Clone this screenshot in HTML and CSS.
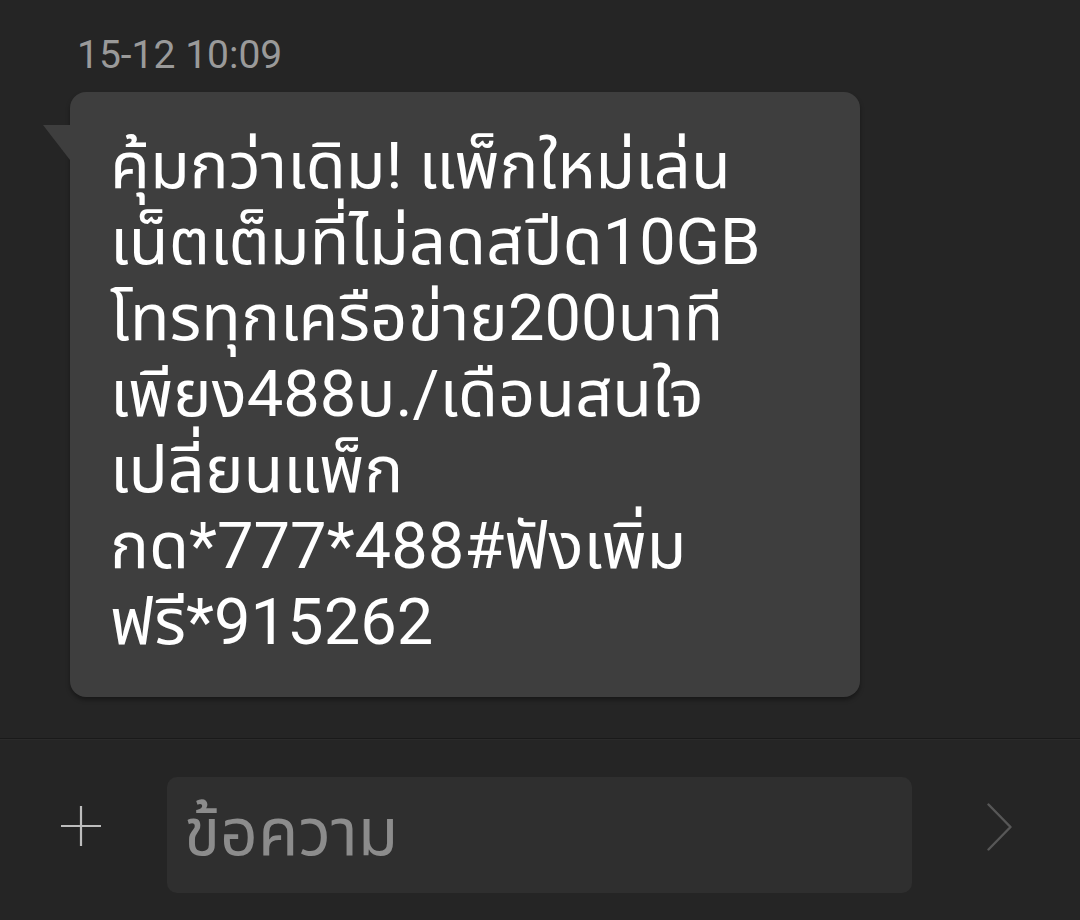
FILE: index.html
```html
<!DOCTYPE html>
<html lang="th">
<head>
<meta charset="utf-8">
<link rel="stylesheet" href="styles.css">
</head>
<body>
<div class="screen">
  <main class="thread">
    <div class="time">15-12 10:09</div>
    <div class="bubble">
      <p class="msg">คุ้มกว่าเดิม! แพ็กใหม่เล่น<br>เน็ตเต็มที่ไม่ลดสปีด10GB<br>โทรทุกเครือข่าย200นาที<br>เพียง488บ./เดือนสนใจ<br>เปลี่ยนแพ็ก<br>กด*777*488#ฟังเพิ่ม<br>ฟรี*915262</p>
    </div>
  </main>
  <footer class="composer">
    <div class="add">
      <svg width="40" height="40" viewBox="0 0 40 40"><path d="M20 0V40M0 20H40" stroke="#bdbdbd" stroke-width="2.2" fill="none"/></svg>
    </div>
    <div class="input">ข้อความ</div>
    <div class="send">
      <svg width="26" height="48" viewBox="0 0 26 48"><path d="M1.5 1.5L23.5 24L1.5 46.5" stroke="#575757" stroke-width="2.4" fill="none" stroke-linecap="round" stroke-linejoin="round"/></svg>
    </div>
  </footer>
</div>
</body>
</html>
```

FILE: styles.css
```css
html, body {
  margin: 0;
  padding: 0;
  background: #252525;
}
.screen {
  width: 1080px;
  height: 920px;
  display: flex;
  flex-direction: column;
  font-family: Roboto, "Noto Sans Thai", "Noto Sans", "DejaVu Sans", sans-serif;
  overflow: hidden;
}
.thread {
  height: 739px;
  box-sizing: border-box;
  padding-top: 32px;
  border-bottom: 1px solid #1a1a1a;
}
.time {
  margin-left: 77px;
  font-size: 39px;
  line-height: 46px;
  color: #9a9a9a;
  height: 60px;
}
.bubble {
  position: relative;
  margin-left: 70px;
  width: 790px;
  height: 605px;
  box-sizing: border-box;
  padding: 36px 40px 37px 40px;
  background: #3e3e3e;
  border-radius: 16px;
  box-shadow: 0 3px 4px rgba(0, 0, 0, 0.35);
}
.bubble::before {
  content: "";
  position: absolute;
  left: -27px;
  top: 33px;
  width: 27px;
  height: 35px;
  background: #3e3e3e;
  clip-path: polygon(0 0, 100% 0, 100% 100%);
}
.msg {
  margin: 0;
  color: #ffffff;
  font-size: 65px;
  line-height: 76px;
  white-space: nowrap;
}
.composer {
  flex: 1;
  display: flex;
  align-items: center;
  border-top: 1px solid #2b2b2b;
}
.add {
  width: 162px;
  display: flex;
  justify-content: center;
  margin-bottom: 8px;
}
.add svg, .send svg {
  display: block;
}
.input {
  margin-left: 5px;
  width: 745px;
  height: 116px;
  margin-top: 10px;
  box-sizing: border-box;
  padding-left: 17px;
  display: flex;
  align-items: center;
  background: #2f2f2f;
  border-radius: 10px;
  color: #8c8c8c;
  font-size: 66px;
}
.send {
  flex: 1;
  display: flex;
  justify-content: center;
  margin-bottom: 6px;
  padding-left: 8px;
}
```
